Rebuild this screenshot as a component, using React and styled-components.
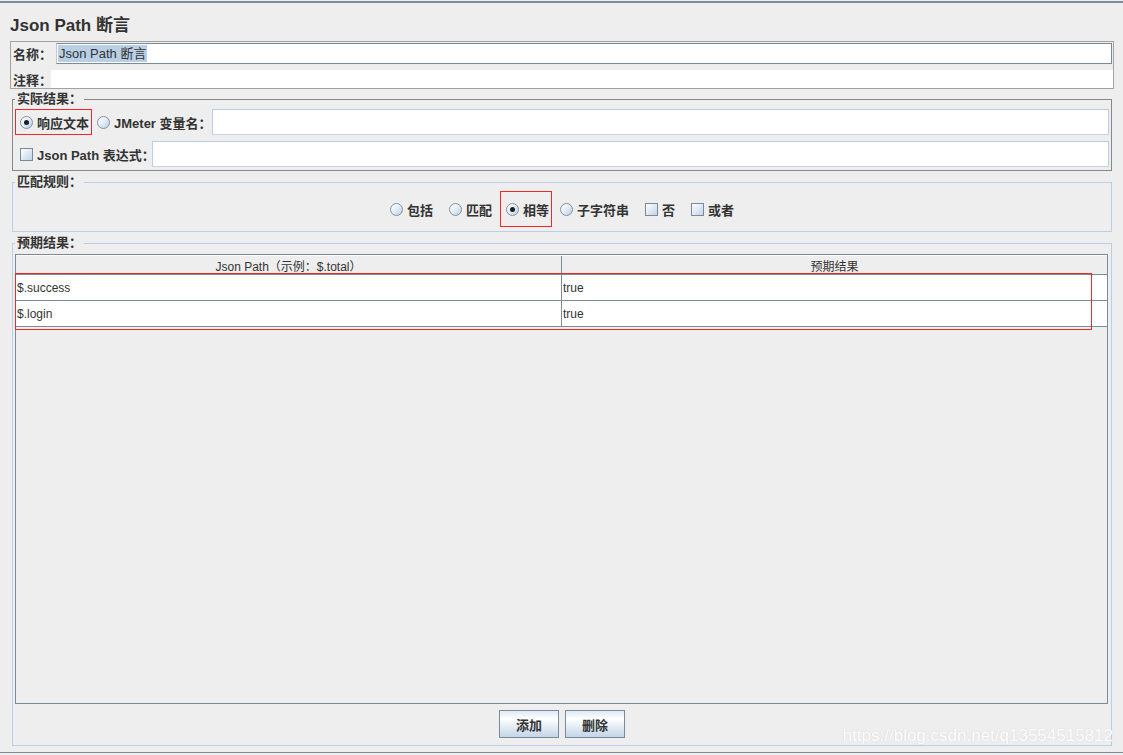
import styled, { createGlobalStyle } from 'styled-components';

const GlobalStyle = createGlobalStyle`
  html, body {
    margin: 0;
    padding: 0;
    background: #eeeeee;
  }
  body {
    font-family: "Liberation Sans", "Noto Sans CJK SC", sans-serif;
    color: #333333;
  }
`;

const Page = styled.div`
  position: relative;
  box-sizing: border-box;
  width: 1123px;
  height: 752px;
  margin-top: 1px;
  padding: 0 9px 0 10px;
  border-top: 2px solid #7c8c9b;
  border-bottom: 1px solid #7c8c9b;
  display: flex;
  flex-direction: column;
`;

const Title = styled.h1`
  margin: 0 0 4px;
  padding-top: 12px;
  font-size: 17px;
  line-height: 22px;
  font-weight: bold;
  color: #333333;
`;

const NamePanel = styled.div`
  border: 1px solid #a3a3a3;
  padding: 1px 0 0 1px;
  display: grid;
  row-gap: 6px;
`;

const FieldRow = styled.div`
  display: flex;
  align-items: center;
  height: ${(p) => p.$h}px;
`;

const Label = styled.span`
  flex: none;
  width: ${(p) => (p.$w ? `${p.$w}px` : 'auto')};
  padding-left: ${(p) => p.$pad || 0}px;
  font-size: 13px;
  font-weight: bold;
  white-space: nowrap;
  color: #333333;
`;

const NameField = styled.div`
  flex: 1;
  box-sizing: border-box;
  height: 21px;
  margin-right: 1px;
  background: #ffffff;
  border: 1px solid #7a8a99;
  border-left-color: #c8c8c8;
  display: flex;
  align-items: center;
  padding-left: 1px;
`;

const Selected = styled.span`
  background: #b8cfe5;
  font-size: 13px;
  line-height: 17px;
  padding: 0 1px;
  color: #333333;
`;

const CommentField = styled.div`
  flex: 1;
  height: 18px;
  background: #ffffff;
`;

const Group = styled.fieldset`
  margin: ${(p) => p.$top}px 2px 0 2px;
  padding: ${(p) => p.$pad};
  border: 1px solid ${(p) => (p.$tone === 'dark' ? '#888888' : '#b8cfe5')};
  min-width: 0;
`;

const Legend = styled.legend`
  padding: 0 2px;
  font-size: 13px;
  line-height: 16px;
  font-weight: bold;
  color: #333333;
`;

const FormRows = styled.div`
  display: grid;
  row-gap: 6px;
`;

const FormRow = styled.div`
  display: flex;
  align-items: center;
  height: 26px;
`;

const Option = styled.label`
  display: inline-flex;
  align-items: center;
  gap: 4px;
  box-sizing: border-box;
  height: ${(p) => p.$h || 26}px;
  padding: ${(p) => p.$pad || '0 7px'};
  border: 1px solid ${(p) => (p.$marked ? '#f02828' : 'transparent')};
  font-size: 13px;
  font-weight: bold;
  white-space: nowrap;
  color: #333333;
`;

const Radio = styled.span`
  position: relative;
  flex: none;
  box-sizing: border-box;
  width: 13px;
  height: 13px;
  border-radius: 50%;
  border: 1px solid #8292a2;
  background: linear-gradient(135deg, #ffffff 0%, #e6eef6 45%, #bccfe3 100%);

  &::after {
    content: '';
    display: ${(p) => (p.$checked ? 'block' : 'none')};
    position: absolute;
    left: 3px;
    top: 3px;
    width: 5px;
    height: 5px;
    border-radius: 50%;
    background: #1e1e1e;
  }
`;

const Check = styled.span`
  flex: none;
  box-sizing: border-box;
  width: 13px;
  height: 13px;
  border: 1px solid #7a8a99;
  background: linear-gradient(135deg, #ffffff 0%, #e3ebf4 45%, #c3d4e7 100%);
`;

const InputField = styled.div`
  flex: 1;
  box-sizing: border-box;
  height: 26px;
  margin-left: ${(p) => p.$gap}px;
  background: #ffffff;
  border: 1px solid #b8cfe5;
  border-bottom-color: #c6d3e2;
`;

const RuleRow = styled.div`
  display: flex;
  justify-content: center;
  align-items: center;
  height: 36px;
`;

const TablePane = styled.div`
  position: relative;
  box-sizing: border-box;
  height: 450px;
  margin-right: 1px;
  border: 1px solid #7a8a99;
  background: #eeeeee;
`;

const TableRow = styled.div`
  display: grid;
  grid-template-columns: 546px 1fr;
  box-sizing: border-box;
  height: ${(p) => (p.$head ? 20 : 26)}px;
  background: ${(p) => (p.$head ? '#eeeeee' : '#ffffff')};
  border-top: ${(p) => (p.$head ? '1px solid #ffffff' : 'none')};
  border-bottom: 1px solid #7a8a99;
`;

const Cell = styled.div`
  display: flex;
  align-items: center;
  justify-content: ${(p) => (p.$head ? 'center' : 'flex-start')};
  padding-left: ${(p) => (p.$head ? 0 : 1)}px;
  font-size: 12px;
  color: #333333;
  white-space: nowrap;
  overflow: hidden;

  &:first-child {
    border-right: 1px solid #7a8a99;
  }
`;

const Annotation = styled.div`
  position: absolute;
  z-index: 2;
  left: -1px;
  top: 18px;
  width: 1077px;
  height: 57px;
  box-sizing: border-box;
  border: 1px solid #f02828;
  pointer-events: none;
`;

const ButtonRow = styled.div`
  display: flex;
  justify-content: center;
  gap: 6px;
  margin-top: 6px;
`;

const Button = styled.button`
  box-sizing: border-box;
  width: 60px;
  height: 28px;
  padding: 0;
  border: 1px solid #7a8a99;
  background: linear-gradient(180deg, #dfe9f4 0%, #ffffff 30%, #e9f0f7 55%, #c3d5e8 100%);
  font-family: inherit;
  font-size: 13px;
  font-weight: bold;
  color: #333333;
`;

const Watermark = styled.div`
  position: absolute;
  right: 10px;
  bottom: 6px;
  font-family: "Liberation Sans", sans-serif;
  font-size: 17px;
  line-height: 20px;
  color: #ffffff;
  text-shadow: 0 0 1px rgba(160, 160, 160, 0.5);
  pointer-events: none;
`;

const rules = [
  { label: '包括', kind: 'radio' },
  { label: '匹配', kind: 'radio' },
  { label: '相等', kind: 'radio', checked: true, marked: true },
  { label: '子字符串', kind: 'radio' },
  { label: '否', kind: 'check' },
  { label: '或者', kind: 'check' },
];

const rows = [
  ['$.success', 'true'],
  ['$.login', 'true'],
];

export default function App() {
  return (
    <>
      <GlobalStyle />
      <Page>
        <Title>Json Path 断言</Title>

        <NamePanel>
          <FieldRow $h={21}>
            <Label $w={43} $pad={1}>名称：</Label>
            <NameField>
              <Selected>Json Path 断言</Selected>
            </NameField>
          </FieldRow>
          <FieldRow $h={18}>
            <Label $w={38} $pad={1}>注释：</Label>
            <CommentField />
          </FieldRow>
        </NamePanel>

        <Group $tone="dark" $top={2} $pad="2px 2px 3px 2px">
          <Legend>实际结果：</Legend>
          <FormRows>
            <FormRow>
              <Option $marked $pad="0 2px 0 4px">
                <Radio $checked />
                响应文本
              </Option>
              <Option $pad="0 0 0 4px">
                <Radio />
                JMeter 变量名：
              </Option>
              <InputField $gap={-1} />
            </FormRow>
            <FormRow>
              <Option $pad="0 0 0 4px">
                <Check />
                Json Path 表达式：
              </Option>
              <InputField $gap={-4} />
            </FormRow>
          </FormRows>
        </Group>

        <Group $tone="light" $top={3} $pad="1px 2px 4px 2px">
          <Legend>匹配规则：</Legend>
          <RuleRow>
            {rules.map((r) => (
              <Option
                key={r.label}
                $h={36}
                $marked={r.marked}
                $pad={r.marked ? '0 2px 0 5px' : '0 7px'}
              >
                {r.kind === 'radio' ? <Radio $checked={r.checked} /> : <Check />}
                {r.label}
              </Option>
            ))}
          </RuleRow>
        </Group>

        <Group $tone="light" $top={3} $pad="3px 2px 7px 2px">
          <Legend>预期结果：</Legend>
          <TablePane>
            <TableRow $head>
              <Cell $head>Json Path（示例：$.total）</Cell>
              <Cell $head>预期结果</Cell>
            </TableRow>
            {rows.map(([path, expected]) => (
              <TableRow key={path}>
                <Cell>{path}</Cell>
                <Cell>{expected}</Cell>
              </TableRow>
            ))}
            <Annotation />
          </TablePane>
          <ButtonRow>
            <Button>添加</Button>
            <Button>删除</Button>
          </ButtonRow>
        </Group>

        <Watermark>https://blog.csdn.net/q13554515812</Watermark>
      </Page>
    </>
  );
}
